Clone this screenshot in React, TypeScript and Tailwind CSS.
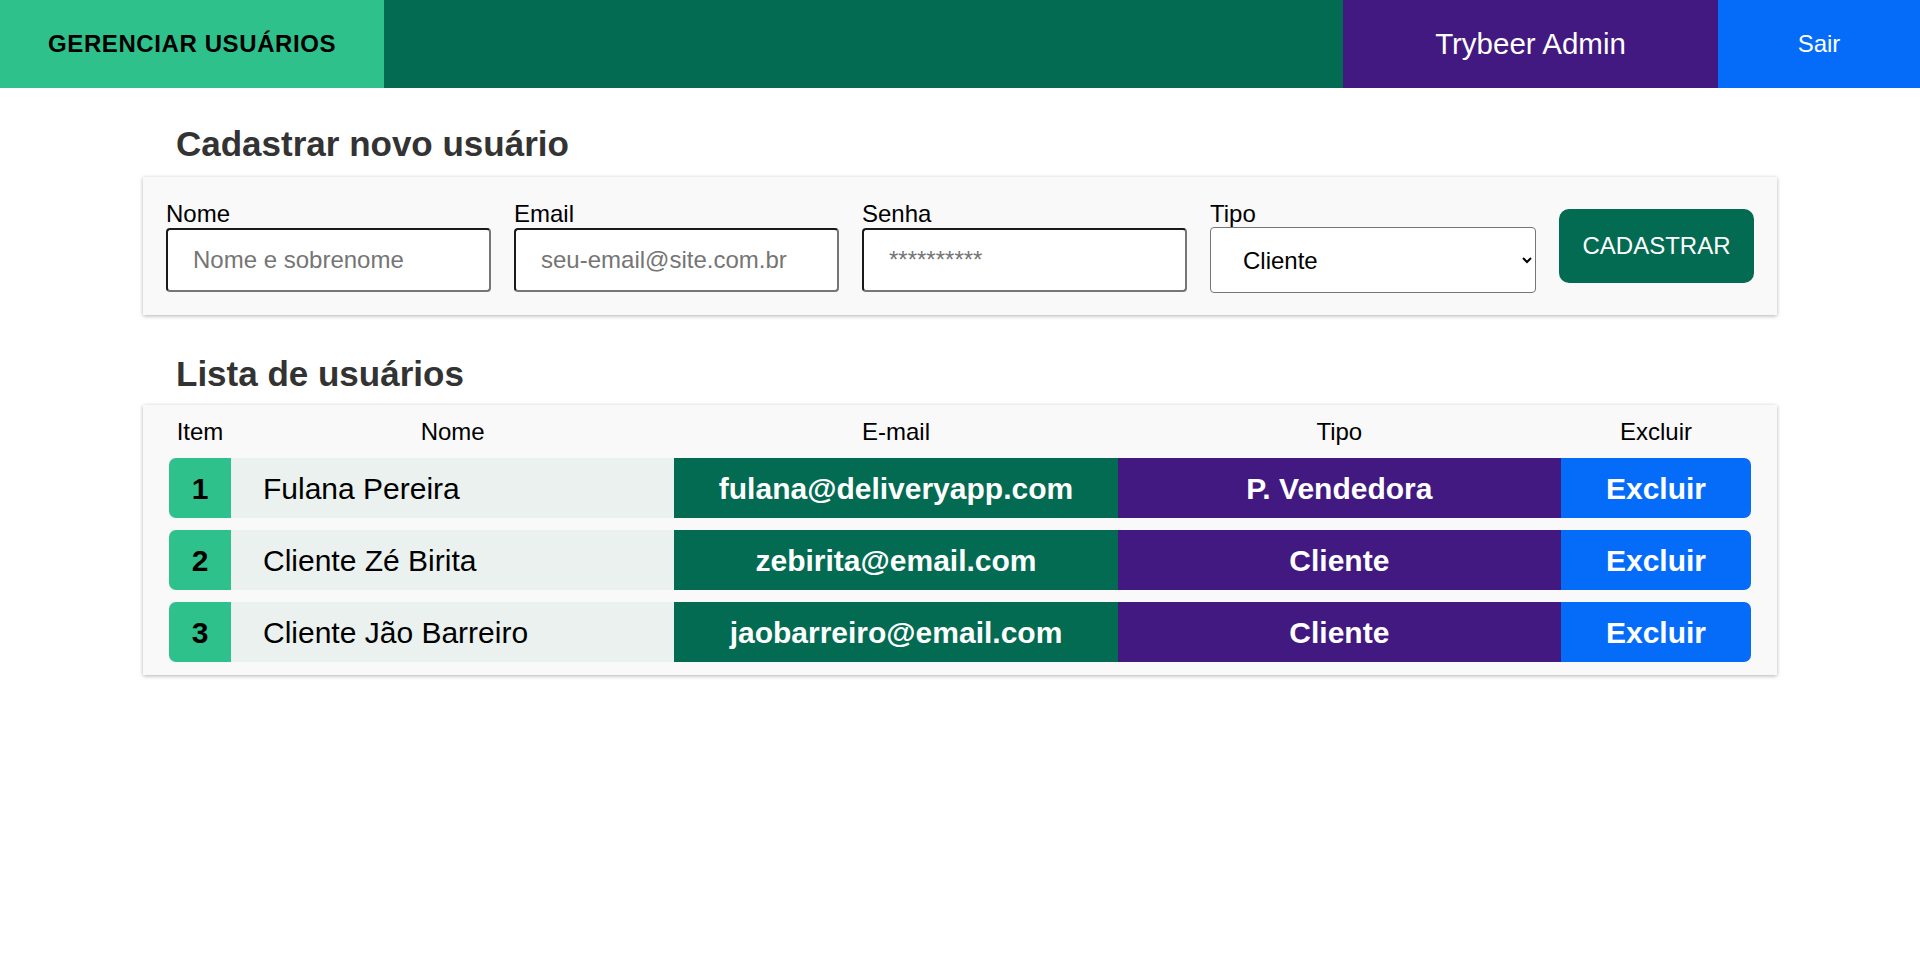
import React from "react";

const users = [
  { id: 1, name: "Fulana Pereira", email: "fulana@deliveryapp.com", role: "P. Vendedora" },
  { id: 2, name: "Cliente Zé Birita", email: "zebirita@email.com", role: "Cliente" },
  { id: 3, name: "Cliente Jão Barreiro", email: "jaobarreiro@email.com", role: "Cliente" },
];

const inputClass =
  "w-[325px] h-[64px] rounded-[4px] border-2 border-t-[#1a1a1a] border-l-[#1a1a1a] border-b-[#767676] border-r-[#767676] bg-white pl-[25px] text-[24px] text-black outline-none placeholder:text-[#757575]";

function Field({ label, children }: { label: string; children: React.ReactNode }) {
  return (
    <label className="flex flex-col self-start pt-[23px]">
      <span className="text-[24px] leading-[28px] text-black">{label}</span>
      {children}
    </label>
  );
}

function NavBar() {
  return (
    <header className="flex h-[88px] w-full">
      <div className="flex items-center bg-[#2fc18c] px-[48px] text-[24px] font-bold tracking-[0.6px] text-black">
        GERENCIAR USUÁRIOS
      </div>
      <div className="flex-1 bg-[#036b52]" />
      <div className="flex w-[375px] items-center justify-center bg-[#421981] text-[29.5px] text-white">
        Trybeer Admin
      </div>
      <button className="flex w-[202px] items-center justify-center bg-[#056cf9] text-[24px] text-white">
        Sair
      </button>
    </header>
  );
}

export default function App() {
  return (
    <div className="min-h-screen bg-white font-['Liberation_Sans',Arial,sans-serif]">
      <NavBar />

      <main className="mx-auto w-[1634px]">
        {/* Novo usuário */}
        <h2 className="mt-[36px] mb-[13px] pl-[33px] text-[35px] font-bold leading-[40px] text-[#333]">
          Cadastrar novo usuário
        </h2>
        <form
          className="flex h-[138px] items-center gap-[23px] bg-[#f9f9f9] px-[23px] shadow-[0_1px_4px_rgba(0,0,0,0.3)]"
          onSubmit={(e) => e.preventDefault()}
        >
          <Field label="Nome">
            <input className={inputClass} placeholder="Nome e sobrenome" />
          </Field>
          <Field label="Email">
            <input className={inputClass} placeholder="seu-email@site.com.br" />
          </Field>
          <Field label="Senha">
            <input className={inputClass} type="password" placeholder="**********" />
          </Field>
          <Field label="Tipo">
            <select
              className="-mt-px h-[66px] w-[326px] rounded-[4px] border border-[#767676] bg-white pl-[28px] pr-[8px] text-[24px] text-black"
              defaultValue="customer"
            >
              <option value="customer">Cliente</option>
              <option value="seller">P. Vendedora</option>
              <option value="administrator">Administrador</option>
            </select>
          </Field>
          <button
            type="submit"
            className="h-[74px] w-[196px] rounded-[10px] bg-[#036b52] text-[24px] text-white"
          >
            CADASTRAR
          </button>
        </form>

        {/* Lista */}
        <h2 className="mt-[39px] mb-[11px] pl-[33px] text-[35px] font-bold leading-[40px] text-[#333]">
          Lista de usuários
        </h2>
        <div className="flex flex-col gap-[12px] bg-[#f9f9f9] px-[26px] py-[13px] shadow-[0_1px_4px_rgba(0,0,0,0.3)]">
          <div className="grid h-[28px] grid-cols-[62px_1fr_1fr_1fr_190px] items-center text-center text-[24px] leading-[28px] text-black">
            <span>Item</span>
            <span>Nome</span>
            <span>E-mail</span>
            <span>Tipo</span>
            <span>Excluir</span>
          </div>
          {users.map((u) => (
            <div
              key={u.id}
              className="grid h-[60px] grid-cols-[62px_1fr_1fr_1fr_190px] text-[30px]"
            >
              <div className="flex items-center justify-center rounded-l-[7px] bg-[#2fc18c] font-bold text-black">
                {u.id}
              </div>
              <div className="flex items-center bg-[#eaf1ef] pl-[32px] text-black">{u.name}</div>
              <div className="flex items-center justify-center bg-[#036b52] font-bold text-white">
                {u.email}
              </div>
              <div className="flex items-center justify-center bg-[#421981] font-bold text-white">
                {u.role}
              </div>
              <button className="flex items-center justify-center rounded-r-[7px] bg-[#056cf9] font-bold text-white">
                Excluir
              </button>
            </div>
          ))}
        </div>
      </main>
    </div>
  );
}
